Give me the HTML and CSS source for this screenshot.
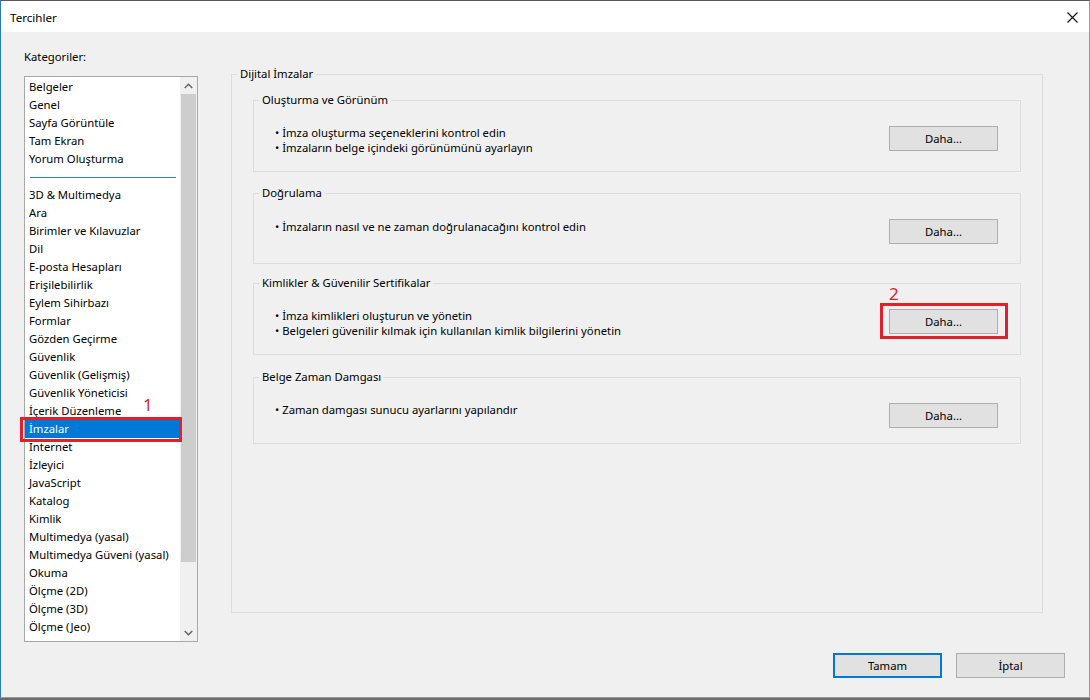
FILE: index.html
```html
<!DOCTYPE html>
<html lang="tr">
<head>
<meta charset="utf-8">
<title>Tercihler</title>
<link rel="stylesheet" href="styles.css">
</head>
<body>
<div class="window">
  <div class="titlebar">
    <span class="title">Tercihler</span>
    <span class="close"><svg width="11" height="11" viewBox="0 0 11 11"><path d="M0.5 0.5 L10.5 10.5 M10.5 0.5 L0.5 10.5" stroke="#111" stroke-width="1.1" fill="none"/></svg></span>
  </div>
  <div class="main">
    <div class="left">
      <div class="cat-label">Kategoriler:</div>
      <div class="listbox">
        <ul class="items">
          <li>Belgeler</li>
          <li>Genel</li>
          <li>Sayfa Görüntüle</li>
          <li>Tam Ekran</li>
          <li>Yorum Oluşturma</li>
          <li class="sep"></li>
          <li>3D &amp; Multimedya</li>
          <li>Ara</li>
          <li>Birimler ve Kılavuzlar</li>
          <li>Dil</li>
          <li>E-posta Hesapları</li>
          <li>Erişilebilirlik</li>
          <li>Eylem Sihirbazı</li>
          <li>Formlar</li>
          <li>Gözden Geçirme</li>
          <li>Güvenlik</li>
          <li>Güvenlik (Gelişmiş)</li>
          <li>Güvenlik Yöneticisi</li>
          <li>İçerik Düzenleme</li>
          <li class="selected">İmzalar<span class="mark mark1"></span><span class="num num1">1</span></li>
          <li>Internet</li>
          <li>İzleyici</li>
          <li>JavaScript</li>
          <li>Katalog</li>
          <li>Kimlik</li>
          <li>Multimedya (yasal)</li>
          <li>Multimedya Güveni (yasal)</li>
          <li>Okuma</li>
          <li>Ölçme (2D)</li>
          <li>Ölçme (3D)</li>
          <li>Ölçme (Jeo)</li>
        </ul>
        <div class="scrollbar">
          <div class="arrow"><svg width="9" height="6" viewBox="0 0 9 6"><path d="M0.7 5 L4.5 1.2 L8.3 5" stroke="#606060" stroke-width="1.4" fill="none"/></svg></div>
          <div class="track"><div class="thumb"></div></div>
          <div class="arrow"><svg width="9" height="6" viewBox="0 0 9 6"><path d="M0.7 1 L4.5 4.8 L8.3 1" stroke="#606060" stroke-width="1.4" fill="none"/></svg></div>
        </div>
      </div>
    </div>
    <div class="right">
      <fieldset class="group outer">
        <legend>Dijital İmzalar</legend>
        <div class="outer-body">
          <fieldset class="group inner g1">
            <legend>Oluşturma ve Görünüm</legend>
            <div class="row">
              <div class="bullets">
                <div>• İmza oluşturma seçeneklerini kontrol edin</div>
                <div>• İmzaların belge içindeki görünümünü ayarlayın</div>
              </div>
              <div class="btn-wrap"><button class="btn">Daha...</button></div>
            </div>
          </fieldset>
          <fieldset class="group inner g2">
            <legend>Doğrulama</legend>
            <div class="row">
              <div class="bullets">
                <div>• İmzaların nasıl ve ne zaman doğrulanacağını kontrol edin</div>
              </div>
              <div class="btn-wrap"><button class="btn">Daha...</button></div>
            </div>
          </fieldset>
          <fieldset class="group inner g3">
            <legend>Kimlikler &amp; Güvenilir Sertifikalar</legend>
            <div class="row">
              <div class="bullets">
                <div>• İmza kimlikleri oluşturun ve yönetin</div>
                <div>• Belgeleri güvenilir kılmak için kullanılan kimlik bilgilerini yönetin</div>
              </div>
              <div class="btn-wrap"><button class="btn">Daha...</button><span class="mark mark2"></span><span class="num num2">2</span></div>
            </div>
          </fieldset>
          <fieldset class="group inner g4">
            <legend>Belge Zaman Damgası</legend>
            <div class="row">
              <div class="bullets">
                <div>• Zaman damgası sunucu ayarlarını yapılandır</div>
              </div>
              <div class="btn-wrap"><button class="btn">Daha...</button></div>
            </div>
          </fieldset>
        </div>
      </fieldset>
    </div>
  </div>
  <div class="footer">
    <button class="btn default">Tamam</button>
    <button class="btn">İptal</button>
  </div>
</div>
</body>
</html>
```
FILE: styles.css
```css
* { box-sizing: border-box; }
html, body { margin: 0; padding: 0; }
body {
  width: 1090px;
  height: 700px;
  font-family: "Noto Sans", "DejaVu Sans", sans-serif;
  font-size: 11.3px;
  color: #000;
  background: #6b6b6b;
  overflow: hidden;
}
.window {
  width: 1090px;
  height: 698px;
  background: #f0f0f0;
  border: 1px solid #9a9a9a;
  border-left: 1px solid #2a79c4;
  border-top-color: #5a5a5a;
  display: flex;
  flex-direction: column;
}
.titlebar {
  height: 31px;
  flex: none;
  background: #fff;
  display: flex;
  align-items: center;
  justify-content: space-between;
  padding: 1px 11px 0 9px;
  font-size: 11.6px;
}
.close { display: flex; }
.main { flex: 1; display: flex; }
.left { padding: 17px 0 0 23px; }
.cat-label { height: 16px; line-height: 16px; }
.listbox {
  margin-top: 11px;
  width: 174px;
  height: 566px;
  border: 1px solid #a8a8a8;
  background: #fff;
  display: flex;
}
.items {
  list-style: none;
  margin: 0;
  padding: 1px 0 0 0;
  flex: 1;
}
.items li {
  height: 18px;
  line-height: 18px;
  padding-left: 4px;
  white-space: nowrap;
  position: relative;
}
.items li.sep { padding: 9px 4px 0 5px; }
.items li.sep::after {
  content: "";
  display: block;
  height: 1px;
  background: #3483c2;
}
.items li.selected { background: #0078d7; color: #fff; margin-right: 1px; }
.mark {
  position: absolute;
  border: 3px solid #e0212b;
  pointer-events: none;
}
.mark1 { left: -5px; right: -3px; top: -3px; bottom: -4px; }
.num {
  position: absolute;
  color: #e0212b;
  font-size: 17px;
  line-height: 16px;
}
.num1 { left: 118px; top: -23px; }
.scrollbar {
  width: 17px;
  flex: none;
  background: #f0f0f0;
  display: flex;
  flex-direction: column;
}
.arrow { height: 17px; flex: none; display: flex; align-items: center; justify-content: center; }
.track { flex: 1; }
.thumb { margin: 0 1px; height: 468px; background: #cdcdcd; }

.right { padding-top: 34px; margin-left: 33px; }
fieldset.group {
  border: 1px solid #dcdcdc;
  margin: 0;
  padding: 0;
  min-width: 0;
}
fieldset.group > legend {
  padding: 0 3px;
  margin-left: 5px;
  line-height: 16px;
  height: 16px;
}
fieldset.outer { width: 812px; height: 547px; }
.outer-body { padding: 10px 21px 0 21px; }
fieldset.g1 { margin-bottom: 13px; }
fieldset.g2 { margin-bottom: 11px; }
fieldset.g3 { margin-bottom: 14px; }
.row {
  display: flex;
  justify-content: space-between;
  align-items: flex-start;
  padding: 17px 22px 0 21px;
}
.g1 .row { height: 63px; }
.g2 .row { height: 62px; }
.g2 .bullets { padding-top: 1px; }
.g3 .row { height: 63px; }
.g4 .row { height: 58px; }
.bullets { line-height: 15px; }
.btn-wrap { position: relative; margin-top: 1px; }
.btn {
  font-family: inherit;
  font-size: 11.3px;
  color: #000;
  width: 109px;
  height: 25px;
  background: #e1e1e1;
  border: 1px solid #adadad;
  border-radius: 0;
  padding: 0;
  display: block;
}
.mark2 { left: -9px; right: -10px; top: -6px; bottom: -5px; }
.num2 { left: 0; top: -23px; }
.footer {
  flex: none;
  display: flex;
  justify-content: flex-end;
  gap: 14px;
  padding: 0 24px 19px 0;
}
.btn.default { border: 2px solid #0078d7; }
```
